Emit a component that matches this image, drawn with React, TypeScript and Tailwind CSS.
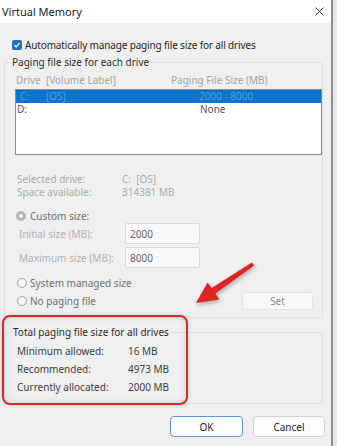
import React from "react";

const FONT = { fontFamily: '"Noto Sans", "Open Sans", sans-serif' };

function Radio({ checked = false }: { checked?: boolean }) {
  if (checked) {
    return (
      <span className="flex h-[10px] w-[10px] shrink-0 items-center justify-center rounded-full bg-[#b4b4b4]">
        <span className="h-[4px] w-[4px] rounded-full bg-[#f4f4f4]" />
      </span>
    );
  }
  return (
    <span className="h-[10px] w-[10px] shrink-0 rounded-full border border-[#a6a6a6] bg-[#f6f6f6]" />
  );
}

function SizeInput({ label, value }: { label: string; value: string }) {
  return (
    <div className="flex h-[21px] items-center pl-[14px]">
      <span className="w-[106px] text-[#b0b0b0]">{label}</span>
      <div className="flex h-[21px] w-[75px] items-center rounded-[2px] border border-[#d9d9d9] bg-[#f9f9f9] pl-[4px] text-[#666]">
        {value}
      </div>
    </div>
  );
}

const totals = [
  { label: "Minimum allowed:", value: "16 MB" },
  { label: "Recommended:", value: "4973 MB" },
  { label: "Currently allocated:", value: "2000 MB" },
];

export default function App() {
  return (
    <div
      className="relative flex h-[446px] w-[337px] overflow-hidden bg-white text-[10px] leading-[14px]"
      style={FONT}
    >
      <div className="flex w-[331px] flex-col">
        {/* title bar */}
        <div className="flex h-[23px] shrink-0 items-center justify-between bg-white pl-[2px] pr-[7px]">
          <span className="text-[11px] text-[#1b1b1b]">Virtual Memory</span>
          <svg width="9" height="9" viewBox="0 0 9 9" className="mb-[1px]">
            <path d="M0.5 0.5 L8.5 8.5 M8.5 0.5 L0.5 8.5" stroke="#333" strokeWidth="1" />
          </svg>
        </div>

        <div className="flex flex-1 flex-col bg-[#f0f0f0]">
          {/* auto manage */}
          <div className="mt-[15px] flex h-[14px] items-center gap-[3px] pl-[12px] text-[#1f1f1f]">
            <span className="flex h-[10px] w-[10px] items-center justify-center rounded-[2px] bg-[#1f6fc5]">
              <svg width="8" height="8" viewBox="0 0 8 8">
                <path d="M1.5 4.2 L3.2 5.8 L6.6 2.2" fill="none" stroke="white" strokeWidth="1.2" />
              </svg>
            </span>
            <span className="tracking-[-0.15px]">Automatically manage paging file size for all drives</span>
          </div>

          {/* per drive group */}
          <fieldset className="ml-[4px] mt-[3px] w-[319px] rounded-[3px] border border-[#e0e0e0] pb-[7px]">
            <legend className="ml-[6px] px-[1px] text-[#2b2b2b]">Paging file size for each drive</legend>

            <div className="mt-[4px] flex h-[14px] items-center pl-[11px] text-[#a3a3a3]">
              <span className="w-[155px]">Drive&nbsp; [Volume Label]</span>
              <span>Paging File Size (MB)</span>
            </div>

            <div className="ml-[10px] mt-[2px] h-[66px] w-[307px] border border-[#8a8a8a] bg-white">
              <div className="flex h-[13px] items-center bg-[#0a72d0] leading-[13px] text-[#4e9ee6]">
                <span className="w-[30px] pl-[4px]">C:</span>
                <span className="w-[153px]">[OS]</span>
                <span>2000 - 8000</span>
              </div>
              <div className="flex h-[13px] items-center leading-[13px] text-[#555]">
                <span className="w-[184px] pl-[1px]">D:</span>
                <span>None</span>
              </div>
            </div>

            <div className="mt-[18px] pl-[12px] leading-[13px] text-[#ababab]">
              <div className="flex">
                <span className="w-[105px]">Selected drive:</span>
                <span>C:&nbsp; [OS]</span>
              </div>
              <div className="flex">
                <span className="w-[105px]">Space available:</span>
                <span>314381 MB</span>
              </div>
            </div>

            <div className="mt-[10px] flex h-[14px] items-center gap-[4px] pl-[11px] text-[#6f6f6f]">
              <Radio checked />
              <span>Custom size:</span>
            </div>

            <SizeInput label="Initial size (MB):" value="2000" />
            <div className="mt-[3px]">
              <SizeInput label="Maximum size (MB):" value="8000" />
            </div>

            <div className="mt-[8px] flex h-[14px] items-center gap-[3px] pl-[12px] text-[#6f6f6f]">
              <Radio />
              <span>System managed size</span>
            </div>
            <div className="mt-[2px] flex h-[18px] items-center pl-[12px] text-[#6f6f6f]">
              <Radio />
              <span className="ml-[3px]">No paging file</span>
              <button className="ml-auto mr-[9px] h-[18px] w-[71px] rounded-[3px] border border-[#e3e3e3] bg-[#f9f9f9] text-[#8a8a8a]">
                Set
              </button>
            </div>
          </fieldset>

          {/* totals group */}
          <fieldset className="ml-[4px] mt-[7px] w-[319px] rounded-[3px] border border-[#e0e0e0] pb-[7px]">
            <legend className="ml-[7px] px-[1px] text-[#2b2b2b]">Total paging file size for all drives</legend>
            <div className="pt-[3px] pl-[12px] text-[#3d3d3d]">
              {totals.map((t) => (
                <div key={t.label} className="flex h-[18px] items-center">
                  <span className="w-[111px]">{t.label}</span>
                  <span>{t.value}</span>
                </div>
              ))}
            </div>
          </fieldset>

          <div className="mt-[12px] flex justify-end gap-[10px] pr-[6px]">
            <button className="h-[21px] w-[73px] rounded-[4px] border border-[#5f96cf] bg-[#fdfdfd] text-[#1f1f1f]">
              OK
            </button>
            <button className="h-[21px] w-[72px] rounded-[4px] border border-[#d4d4d4] bg-[#fdfdfd] text-[#1f1f1f]">
              Cancel
            </button>
          </div>
        </div>
      </div>
      <div className="w-[2px] bg-[#8f8f8f]" />
      <div className="flex-1 bg-[#e8e8e8]" />

      {/* annotation overlay */}
      <div className="pointer-events-none absolute left-[2px] top-[315px] h-[90px] w-[186px] rounded-[8px] border-2 border-[#d42a2a] shadow-[inset_0_0_8px_rgba(0,0,0,0.12),0_0_5px_rgba(0,0,0,0.15)]" />
      <svg
        className="pointer-events-none absolute left-0 top-0 drop-shadow-[1px_2px_2px_rgba(0,0,0,0.3)]"
        width="337"
        height="446"
      >
        <polygon
          points="254.2,265.6 215.3,293.5 219.4,299.4 196,303 207.6,282.4 211.7,288.1 251.8,262.4"
          fill="#e02323"
        />
      </svg>
    </div>
  );
}
